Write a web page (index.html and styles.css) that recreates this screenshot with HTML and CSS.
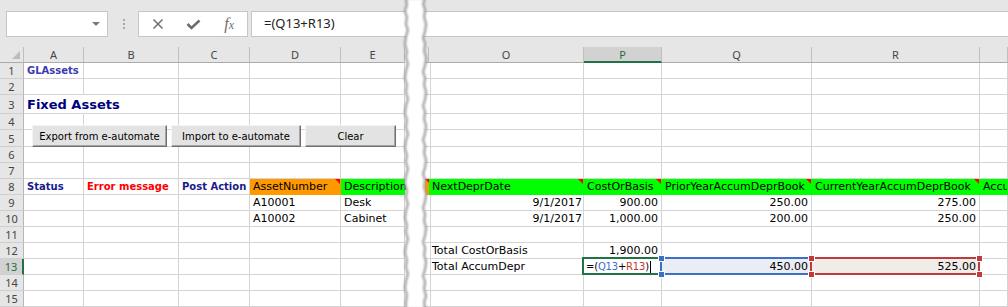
FILE: index.html
```html
<!DOCTYPE html>
<html lang="en">
<head>
  <meta charset="UTF-8" />
  <title>GLAssets - Fixed Assets</title>
  <link rel="stylesheet" href="styles.css">
</head>
<body>
<div class="sheet">

  <!-- name box + formula bar -->
  <div class="toolbar">
    <div class="namebox"><span class="dropdown"></span></div>
    <div class="grip"><i></i><i></i><i></i></div>
    <div class="fxbtns">
      <span class="fxslot">
        <svg width="12" height="12" viewBox="0 0 12 12"><path d="M1.5 1.5 L10.5 10.5 M10.5 1.5 L1.5 10.5" stroke="#6e6e6e" stroke-width="1.5" fill="none"/></svg>
      </span>
      <span class="fxslot">
        <svg width="15" height="11" viewBox="0 0 15 11"><path d="M1.5 5 L5.5 9 L13.5 1.5" stroke="#6e6e6e" stroke-width="2.6" fill="none"/></svg>
      </span>
      <span class="fxslot fx"><i>f</i><i class="sub">x</i></span>
    </div>
    <div class="formula">=(Q13+R13)</div>
  </div>

  <div class="grid">
    <!-- left pane: columns A..E -->
    <div class="pane left">
      <div class="row head">
        <div class="c corner"></div><div class="c">A</div><div class="c">B</div><div class="c">C</div><div class="c">D</div><div class="c">E</div>
      </div>
      <div class="row">
        <div class="c rh">1</div><div class="c title-sm">GLAssets</div><div class="c"></div><div class="c"></div><div class="c"></div><div class="c"></div>
      </div>
      <div class="row">
        <div class="c rh">2</div><div class="c"></div><div class="c"></div><div class="c"></div><div class="c"></div><div class="c"></div>
      </div>
      <div class="row r3">
        <div class="c rh">3</div><div class="c title-lg spill">Fixed Assets</div><div class="c"></div><div class="c"></div><div class="c"></div><div class="c"></div>
      </div>
      <div class="row">
        <div class="c rh">4</div><div class="c"></div><div class="c"></div><div class="c"></div><div class="c"></div><div class="c"></div>
      </div>
      <div class="row r5">
        <div class="c rh">5</div><div class="c"></div><div class="c"></div><div class="c"></div><div class="c"></div><div class="c"></div>
      </div>
      <div class="row">
        <div class="c rh">6</div><div class="c"></div><div class="c"></div><div class="c"></div><div class="c"></div><div class="c"></div>
      </div>
      <div class="row">
        <div class="c rh">7</div><div class="c"></div><div class="c"></div><div class="c"></div><div class="c"></div><div class="c"></div>
      </div>
      <div class="row">
        <div class="c rh">8</div><div class="c lbl navy">Status</div><div class="c lbl red">Error message</div><div class="c lbl navy">Post Action</div><div class="c orange note">AssetNumber</div><div class="c green">Description</div>
      </div>
      <div class="row">
        <div class="c rh">9</div><div class="c"></div><div class="c"></div><div class="c"></div><div class="c">A10001</div><div class="c">Desk</div>
      </div>
      <div class="row">
        <div class="c rh">10</div><div class="c"></div><div class="c"></div><div class="c"></div><div class="c">A10002</div><div class="c">Cabinet</div>
      </div>
      <div class="row">
        <div class="c rh">11</div><div class="c"></div><div class="c"></div><div class="c"></div><div class="c"></div><div class="c"></div>
      </div>
      <div class="row">
        <div class="c rh">12</div><div class="c"></div><div class="c"></div><div class="c"></div><div class="c"></div><div class="c"></div>
      </div>
      <div class="row">
        <div class="c rh sel">13</div><div class="c"></div><div class="c"></div><div class="c"></div><div class="c"></div><div class="c"></div>
      </div>
      <div class="row">
        <div class="c rh">14</div><div class="c"></div><div class="c"></div><div class="c"></div><div class="c"></div><div class="c"></div>
      </div>
      <div class="row">
        <div class="c rh">15</div><div class="c"></div><div class="c"></div><div class="c"></div><div class="c"></div><div class="c"></div>
      </div>
    </div>

    <div class="gap"></div>

    <!-- right pane: columns (N) O..S -->
    <div class="pane right">
      <div class="row head">
        <div class="c"></div><div class="c">O</div><div class="c sel">P</div><div class="c">Q</div><div class="c">R</div><div class="c"></div>
      </div>
      <div class="row"><div class="c"></div><div class="c"></div><div class="c"></div><div class="c"></div><div class="c"></div><div class="c"></div></div>
      <div class="row"><div class="c"></div><div class="c"></div><div class="c"></div><div class="c"></div><div class="c"></div><div class="c"></div></div>
      <div class="row r3"><div class="c"></div><div class="c"></div><div class="c"></div><div class="c"></div><div class="c"></div><div class="c"></div></div>
      <div class="row"><div class="c"></div><div class="c"></div><div class="c"></div><div class="c"></div><div class="c"></div><div class="c"></div></div>
      <div class="row r5"><div class="c"></div><div class="c"></div><div class="c"></div><div class="c"></div><div class="c"></div><div class="c"></div></div>
      <div class="row"><div class="c"></div><div class="c"></div><div class="c"></div><div class="c"></div><div class="c"></div><div class="c"></div></div>
      <div class="row"><div class="c"></div><div class="c"></div><div class="c"></div><div class="c"></div><div class="c"></div><div class="c"></div></div>
      <div class="row">
        <div class="c orange note"></div><div class="c green note">NextDeprDate</div><div class="c green note">CostOrBasis</div><div class="c green note">PriorYearAccumDeprBook</div><div class="c green note">CurrentYearAccumDeprBook</div><div class="c green clip">Accu</div>
      </div>
      <div class="row">
        <div class="c"></div><div class="c num date">9/1/2017</div><div class="c num">900.00</div><div class="c num">250.00</div><div class="c num">275.00</div><div class="c"></div>
      </div>
      <div class="row">
        <div class="c"></div><div class="c num date">9/1/2017</div><div class="c num">1,000.00</div><div class="c num">200.00</div><div class="c num">250.00</div><div class="c"></div>
      </div>
      <div class="row"><div class="c"></div><div class="c"></div><div class="c"></div><div class="c"></div><div class="c"></div><div class="c"></div></div>
      <div class="row">
        <div class="c"></div><div class="c">Total CostOrBasis</div><div class="c num">1,900.00</div><div class="c"></div><div class="c"></div><div class="c"></div>
      </div>
      <div class="row">
        <div class="c"></div><div class="c">Total AccumDepr</div>
        <div class="c active">=(<span class="ref-q">Q13</span>+<span class="ref-r">R13</span>)<span class="caret"></span></div>
        <div class="c num refbox blue">450.00<i class="h tl"></i><i class="h tr"></i><i class="h bl"></i><i class="h br"></i></div>
        <div class="c num refbox redbox">525.00<i class="h tl"></i><i class="h tr"></i><i class="h bl"></i><i class="h br"></i></div>
        <div class="c"></div>
      </div>
      <div class="row"><div class="c"></div><div class="c"></div><div class="c"></div><div class="c"></div><div class="c"></div><div class="c"></div></div>
      <div class="row"><div class="c"></div><div class="c"></div><div class="c"></div><div class="c"></div><div class="c"></div><div class="c"></div></div>
    </div>
  </div>

  <!-- form buttons floating over rows 4-5 -->
  <div class="buttons">
    <button class="xbtn export">Export from e-automate</button>
    <button class="xbtn import">Import to e-automate</button>
    <button class="xbtn clear">Clear</button>
  </div>

  <!-- torn-paper break between E and O -->
  <svg class="rip" width="30" height="307" viewBox="0 0 30 307">
    <defs>
      <filter id="soft" x="-50%" y="0" width="200%" height="100%">
        <feGaussianBlur stdDeviation="0.8"/>
      </filter>
    </defs>
    <path filter="url(#soft)" fill="#fff" stroke="#8a8a8a" stroke-width="2"
      d="M6 -2 L7 5 L5 11 L7 17 L6 24 L8 30 L6 37 L5 44 L7 51 L6 57 L8 64 L6 71 L5 78 L7 85 L6 92 L8 99 L6 106 L5 113 L7 120 L6 127 L8 134 L6 141 L5 148 L7 155 L6 162 L8 169 L6 176 L5 183 L7 190 L6 197 L8 204 L6 211 L5 218 L7 225 L6 232 L8 239 L6 246 L5 253 L7 260 L6 267 L8 274 L6 281 L5 288 L7 295 L6 302 L6 309
         L25 309 L24 302 L26 296 L24 289 L25 282 L23 276 L25 269 L26 262 L24 255 L25 248 L23 242 L25 235 L26 228 L24 221 L25 214 L23 208 L25 201 L26 194 L24 187 L25 180 L23 174 L25 167 L26 160 L24 153 L25 146 L23 140 L25 133 L26 126 L24 119 L25 112 L23 106 L25 99 L26 92 L24 85 L25 78 L23 72 L25 65 L26 58 L24 51 L25 44 L23 38 L25 31 L26 24 L24 17 L25 10 L23 4 L25 -2 Z"/>
  </svg>

</div>
</body>
</html>
```

FILE: styles.css
```css
/* page frame */
body {
  margin: 0;
  background: #fff;
  font-family: "DejaVu Sans", sans-serif;
}
.sheet {
  position: relative;
  width: 1008px; height: 307px;
  overflow: hidden;
}

/* name box + formula bar */
.toolbar {
  height: 47px;
  box-sizing: border-box;
  padding-top: 11px;
  background: #e6e6e6;
  display: flex;
  align-items: flex-start;
}
.namebox {
  width: 102px; height: 26px;
  margin-left: 6px;
  box-sizing: border-box;
  background: #fff;
  border: 1px solid #c6c6c6;
  display: flex; align-items: center; justify-content: flex-end;
  padding-right: 7px;
}
.dropdown {
  border-left: 4px solid transparent;
  border-right: 4px solid transparent;
  border-top: 4px solid #7a7a7a;
}
.grip {
  margin: 8px 0 0 15px;
  display: flex; flex-direction: column; gap: 2px;
}
.grip i { width: 2px; height: 2px; background: #a8a8a8; }
.fxbtns {
  width: 110px; height: 26px;
  margin-left: 13px;
  box-sizing: border-box;
  background: #fff;
  border: 1px solid #c6c6c6;
  display: flex; align-items: center;
  padding-left: 1px;
}
.fxslot {
  width: 36px;
  display: flex; justify-content: center; align-items: center;
}
.fx {
  font-family: "Liberation Serif", serif;
  color: #6e6e6e;
  font-size: 16px;
}
.fx .sub { font-size: 12px; margin-top: 3px; }
.formula {
  flex: 1;
  height: 26px;
  margin-left: 3px;
  box-sizing: border-box;
  background: #fff;
  border: 1px solid #c6c6c6; border-right: none;
  padding-left: 12px;
  font-family: "Noto Sans", sans-serif;
  font-size: 13px; line-height: 23px;
  color: #222;
}

/* grid panes */
.grid { display: flex; }
.pane.left { width: 405px; }
.gap { width: 20px; }
.pane.right { flex: 1; }

.row { display: grid; height: 16px; }
.row.r3 { height: 19px; }
.row.r5 { height: 17px; }
.left .row { grid-template-columns: 24px 60px 95px 71px 91px 64px; }
.right .row { grid-template-columns: 4px 155px 78px 150px 168px 1fr; }

.c {
  box-sizing: border-box;
  border-right: 1px solid #d4d4d4;
  border-bottom: 1px solid #d4d4d4;
  display: flex; align-items: flex-end;
  padding: 0 2px 1px 3px;
  font-size: 11px; line-height: 13px;
  color: #000;
  white-space: nowrap;
  min-width: 0;
}
.c.spill { border-right-color: transparent; }
.c.clip { overflow: hidden; }

/* headers */
.head .c {
  background: #e6e6e6;
  border-right-color: #bfbfbf;
  border-bottom-color: #ababab;
  justify-content: center; align-items: center;
  padding: 0;
  font-family: "Noto Sans", sans-serif;
  font-size: 11px;
  color: #444;
}
.head .c.sel {
  background: #d2d2d2;
  color: #1e6b45;
  border-bottom: 2px solid #217346;
}
.c.corner { position: relative; }
.c.corner::after {
  content: "";
  position: absolute; right: 3px; bottom: 3px;
  border-left: 8px solid transparent;
  border-bottom: 8px solid #bcbcbc;
}
.c.rh {
  background: #e6e6e6;
  border-right-color: #b6b6b6;
  border-bottom-color: #cfcfcf;
  justify-content: center; align-items: center;
  padding: 0;
  font-family: "Noto Sans", sans-serif;
  font-size: 11px;
  color: #444;
}
.c.rh.sel {
  background: #d2d2d2;
  color: #1e6b45;
  border-right: 2px solid #217346;
}

/* cell text styles */
.title-sm { font-weight: bold; color: #3b3bb0; font-size: 10px; }
.title-lg {
  font-weight: bold; color: #000080;
  font-size: 13px; line-height: 17px;
  padding-bottom: 0;
}
.lbl { font-weight: bold; font-size: 10px; }
.navy { color: #1a1a8c; }
.red { color: #ff0000; }
.orange { background: #ff9900; border-color: #ff9900; }
.green { background: #00ff00; border-color: #00ff00; }
.note { position: relative; }
.note::after {
  content: "";
  position: absolute; top: 0; right: 0;
  border-left: 5px solid transparent;
  border-top: 5px solid #ff0000;
}
.num { justify-content: flex-end; padding-right: 3px; }
.num.date { padding-right: 1px; }

/* formula editing in P13 */
.active {
  position: relative;
  padding-left: 2px;
  font-size: 10px;
  letter-spacing: -0.2px;
}
.active::after {
  content: "";
  position: absolute; left: -2px; top: -2px; right: -1px; bottom: -1px;
  border: 2px solid #217346;
}
.ref-q { color: #3d6fc7; }
.ref-r { color: #c0392b; }
.caret {
  width: 1px; height: 12px;
  background: #000;
  margin-left: 1px;
}
.refbox { position: relative; }
.refbox::before {
  content: "";
  position: absolute; left: -2px; top: -2px; right: -1px; bottom: -1px;
  border: 2px solid;
}
.refbox.blue { background: #eaedf4; }
.refbox.blue::before { border-color: #3d6fc7; }
.refbox.redbox { background: #f0ede9; }
.refbox.redbox::before { border-color: #c0393b; }
.h {
  position: absolute;
  width: 5px; height: 5px;
  border: 1px solid #fff;
  z-index: 1;
}
.blue .h { background: #3d6fc7; }
.redbox .h { background: #c0393b; }
.h.tl { left: -4px; top: -4px; }
.h.tr { right: -4px; top: -4px; }
.h.bl { left: -4px; bottom: -4px; }
.h.br { right: -4px; bottom: -4px; }

/* form buttons */
.buttons {
  position: absolute; left: 32px; top: 125px;
  display: flex; gap: 4px;
}
.xbtn {
  height: 22px;
  box-sizing: border-box;
  background: #e3e3e3;
  border: 1px solid;
  border-color: #f4f4f4 #6f6f6f #6f6f6f #f4f4f4;
  box-shadow: inset -1px -1px #a6a6a6;
  font-family: "DejaVu Sans", sans-serif;
  font-size: 10px;
  color: #000;
  padding: 0;
}
.xbtn.export { width: 135px; }
.xbtn.import { width: 130px; }
.xbtn.clear { width: 91px; }

/* torn edge */
.rip { position: absolute; left: 400px; top: 0; }
```
